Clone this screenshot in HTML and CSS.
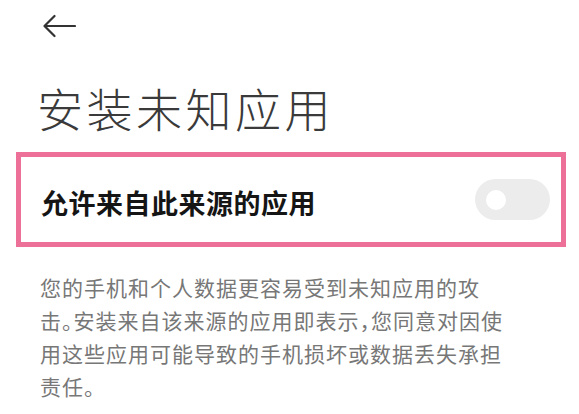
FILE: index.html
```html
<!DOCTYPE html>
<html lang="zh-CN">
<head>
<meta charset="utf-8">
<title>安装未知应用</title>
<link rel="stylesheet" href="styles.css">
</head>
<body>
<div class="page">
  <header class="topbar">
    <svg class="back" width="34" height="24" viewBox="0 0 34 24" aria-label="返回">
      <path d="M33 12 H2.5 M12.5 2 L2.5 12 L12.5 22" fill="none" stroke="#333" stroke-width="2.2" stroke-linecap="round" stroke-linejoin="round"/>
    </svg>
  </header>
  <h1 class="title">安装未知应用</h1>
  <div class="setting">
    <span class="setting-label">允许来自此来源的应用</span>
    <span class="switch"><span class="knob"></span></span>
  </div>
  <p class="desc">您的手机和个人数据更容易受到未知应用的攻击。安装来自该来源的应用即表示，您同意对因使用这些应用可能导致的手机损坏或数据丢失承担责任。</p>
</div>
</body>
</html>
```

FILE: styles.css
```css
html, body {
  margin: 0;
  padding: 0;
  background: #fff;
}
body {
  font-family: "Noto Sans CJK SC", "Noto Sans", sans-serif;
  width: 579px;
  height: 414px;
  overflow: hidden;
}
.page {
  display: flex;
  flex-direction: column;
}
.topbar {
  padding: 14px 0 0 42px;
  height: 24px;
  display: flex;
}
.back {
  display: block;
}
.title {
  margin: 41px 0 0 37px;
  font-size: 46px;
  line-height: 56px;
  font-weight: 300;
  letter-spacing: 3.5px;
  color: #3a3a3a;
}
.setting {
  margin: 17px 13px 0 16px;
  height: 85px;
  border: 5px solid #ec7098;
  display: flex;
  align-items: center;
  justify-content: space-between;
  padding: 0 11px 0 20px;
}
.setting-label {
  font-size: 27px;
  font-weight: 700;
  letter-spacing: 0.5px;
  color: #151515;
  padding-top: 6px;
}
.switch {
  width: 75px;
  height: 41px;
  border-radius: 21px;
  background: #ececec;
  display: flex;
  align-items: center;
  padding-left: 11px;
  box-sizing: border-box;
}
.knob {
  width: 20px;
  height: 20px;
  border-radius: 50%;
  background: #fff;
}
.desc {
  margin: 24px 0 0 40px;
  width: 468px;
  font-size: 21px;
  line-height: 33px;
  letter-spacing: 1px;
  color: #777;
  font-feature-settings: "halt";
}
```
